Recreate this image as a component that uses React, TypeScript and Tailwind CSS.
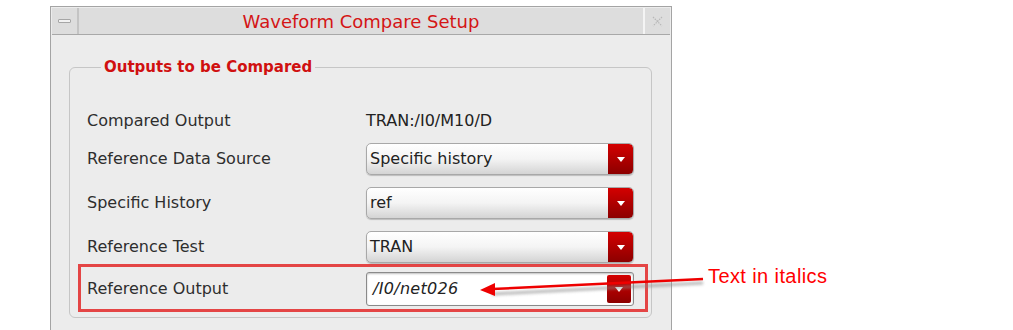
import { ReactNode } from 'react';

function Caret() {
  return (
    <svg width="10" height="7" viewBox="0 0 10 7">
      <path d="M1 1 L9 1 L5 6 Z" fill="#ffffff" />
    </svg>
  );
}

function Dropdown({ value, combo = false }: { value: string; combo?: boolean }) {
  if (combo) {
    return (
      <div className="flex h-[34px] w-[268px] items-stretch rounded-[3px] border border-[#8a8a8a] bg-white p-[2px] shadow-[inset_0_1px_2px_rgba(0,0,0,0.25)]">
        <div className="flex flex-1 items-center pl-[4px] italic tracking-[0.3px] text-[#222]">{value}</div>
        <div className="flex w-[24px] items-center justify-center rounded-[2px] bg-gradient-to-b from-[#d40000] to-[#8c0000]">
          <Caret />
        </div>
      </div>
    );
  }
  return (
    <div className="flex h-[32px] w-[268px] items-stretch overflow-hidden rounded-[5px] border border-[#a8a8a8] bg-gradient-to-b from-white via-[#f4f4f4] to-[#d4d4d4] shadow-[0_1px_1px_rgba(0,0,0,0.2)]">
      <div className="flex flex-1 items-center pl-[3px] text-[#222]">{value}</div>
      <div className="flex w-[25px] items-center justify-center rounded-r-[4px] bg-gradient-to-b from-[#d40000] to-[#8c0000]">
        <Caret />
      </div>
    </div>
  );
}

function Row({ label, children, first = false }: { label: string; children: ReactNode; first?: boolean }) {
  return (
    <div className={`flex items-center ${first ? 'h-[33px]' : 'h-[44px]'}`}>
      <div className="w-[279px] text-[#2e2e2e]">{label}</div>
      {children}
    </div>
  );
}

export default function App() {
  return (
    <div className="relative h-[330px] w-[1013px] overflow-hidden bg-white font-['DejaVu_Sans',sans-serif] text-[16px]">
      {/* Window */}
      <div className="ml-[50px] mt-[6px] h-[340px] w-[622px] border border-[#a4a4a4] bg-[#ececec] p-[1px]">
        {/* Title bar */}
        <div className="flex h-[27px] border-b border-[#a8a8a8] bg-[#dddddd]">
          <div className="flex w-[27px] items-center justify-center border-r-2 border-[#c4c4c4]">
            <div className="h-[4px] w-[13px] rounded-[1px] border border-[#a6a6a6] bg-[#f2f2f2]" />
          </div>
          <div className="flex flex-1 items-center justify-center text-[18px] text-[#d41515]">Waveform Compare Setup</div>
          <div className="flex w-[27px] items-center justify-center border-l-2 border-[#f4f4f4]">
            <svg width="13" height="13" viewBox="0 0 13 13">
              <path d="M2 2 L11 11 M11 2 L2 11" stroke="#b8b8b8" strokeWidth="1.2" strokeDasharray="1.5 1" fill="none" />
            </svg>
          </div>
        </div>

        {/* Content */}
        <div className="pl-[17px] pr-[18px] pt-[22px]">
          <fieldset className="h-[261px] rounded-[6px] border border-[#c6c6c6] pl-[17px] pr-[16px] pt-[27px]">
            <legend className="ml-[14px] px-[3px] text-[15px] leading-[20px] font-bold text-[#d01010]">Outputs to be Compared</legend>
            <Row label="Compared Output" first>
              <div className="text-[#222]">TRAN:/I0/M10/D</div>
            </Row>
            <Row label="Reference Data Source">
              <Dropdown value="Specific history" />
            </Row>
            <Row label="Specific History">
              <Dropdown value="ref" />
            </Row>
            <Row label="Reference Test">
              <Dropdown value="TRAN" />
            </Row>
            <div className="-ml-[9px] -mr-[13px] -mt-[5px] flex h-[48px] items-center border-[3px] border-[#e44545] pl-[6px] pr-[11px] pt-[2px]">
              <div className="w-[279px] text-[#2e2e2e]">Reference Output</div>
              <Dropdown value="/I0/net026" combo />
            </div>
          </fieldset>
        </div>
      </div>

      {/* Annotation */}
      <svg className="absolute left-0 top-0" width="1013" height="330">
        <defs>
          <filter id="sh" x="-10%" y="-200%" width="120%" height="500%">
            <feGaussianBlur stdDeviation="1.5" />
          </filter>
        </defs>
        <path d="M703 283 L492 294" stroke="#888" strokeWidth="3" opacity="0.6" filter="url(#sh)" />
        <path d="M703 279 L492 289" stroke="#ee0000" strokeWidth="2.5" />
        <path d="M480 290 L495 283 L495 296 Z" fill="#ee0000" />
      </svg>
      <div className="absolute left-[708px] top-[261px] font-['Liberation_Sans',sans-serif] text-[20px] tracking-[0.4px] text-[#ff0000]">Text in italics</div>
    </div>
  );
}
